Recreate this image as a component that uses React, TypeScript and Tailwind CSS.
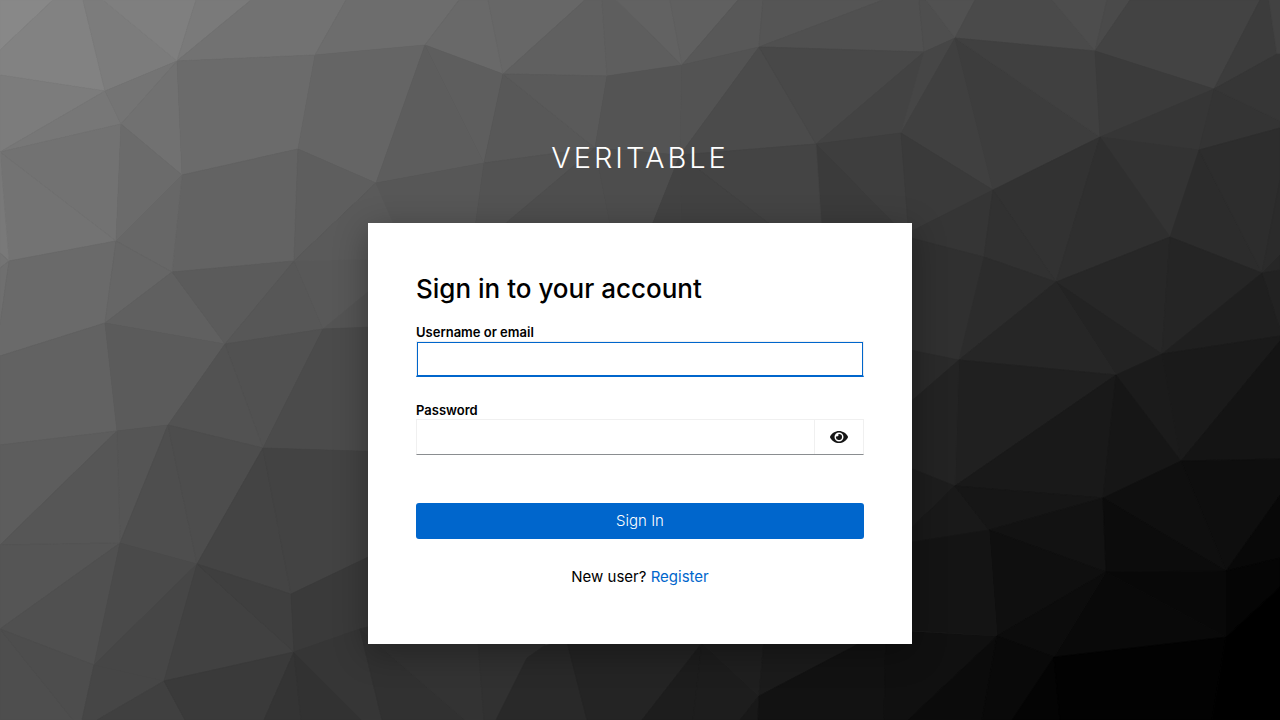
import { useState } from "react";
import { FaEye, FaEyeSlash } from "react-icons/fa";

/* Facets of the low-poly backdrop: [grey level, polygon points]. */
const facets: [number, string][] = [
  [0x88, "0,0 53,0 0,50"],
  [0x82, "53,0 83,0 105,91 0,75 0,50"],
  [0x7c, "83,0 103,0 177,61 105,91"],
  [0x7f, "103,0 196,0 177,61"],
  [0x7a, "196,0 251,0 177,61"],
  [0x72, "251,0 346,0 315,55 177,61"],
  [0x7c, "0,75 105,91 0,152"],
  [0x77, "0,152 105,91 121,124"],
  [0x74, "105,91 177,61 121,124"],
  [0x71, "121,124 177,61 182,175"],
  [0x72, "0,152 121,124 116,241"],
  [0x73, "0,152 116,241 9,261"],
  [0x79, "0,152 9,261 0,253"],
  [0x74, "0,253 9,261 0,268"],
  [0x6b, "177,61 315,55 298,149 182,175"],
  [0x6d, "346,0 459,0 425,45 315,55"],
  [0x6b, "121,124 182,175 116,241"],
  [0x63, "182,175 298,149 294,261 172,272"],
  [0x67, "182,175 116,241 172,272"],
  [0x65, "315,55 425,45 376,183 298,149"],
  [0x5e, "298,149 376,183 294,261"],
  [0x6f, "0,268 9,261 0,325"],
  [0x6a, "9,261 116,241 105,323 0,356 0,325"],
  [0x66, "116,241 172,272 105,323"],
  [0x62, "0,356 105,323 117,431 0,445"],
  [0x60, "172,272 105,323 225,344"],
  [0x5b, "172,272 294,261 225,344"],
  [0x5b, "105,323 225,344 168,425 117,431"],
  [0x5d, "0,445 117,431 0,545"],
  [0x57, "294,261 225,344 323,329"],
  [0x58, "294,261 376,183 520,258 323,329"],
  [0x5a, "294,261 376,183 430,258"],
  [0x54, "323,329 368,292 440,240 440,326"],
  [0x51, "225,344 323,329 263,448"],
  [0x52, "225,344 168,425 263,448"],
  [0x4b, "323,329 450,324 450,454 263,448"],
  [0x55, "117,431 168,425 120,543"],
  [0x56, "0,545 117,431 120,543"],
  [0x4e, "168,425 120,543 197,564"],
  [0x4d, "168,425 263,448 197,564"],
  [0x55, "0,545 120,543 0,629"],
  [0x50, "0,629 120,543 94,665"],
  [0x4a, "120,543 197,564 94,665"],
  [0x46, "94,665 197,564 164,681"],
  [0x44, "263,448 197,564 291,594"],
  [0x43, "263,448 450,454 450,518 291,594"],
  [0x41, "197,564 164,681 294,652"],
  [0x3f, "197,564 291,594 294,652"],
  [0x3a, "291,594 450,518 450,600 360,629 294,652"],
  [0x4e, "0,629 73,720 0,720"],
  [0x4d, "0,629 94,665 82,720 73,720"],
  [0x46, "94,665 164,681 97,720 82,720"],
  [0x40, "164,681 185,720 97,720"],
  [0x3a, "164,681 294,652 264,720 185,720"],
  [0x34, "294,652 301,720 264,720"],
  [0x32, "294,652 362,720 301,720"],
  [0x36, "294,652 360,629 382,720 362,720"],
  [0x31, "360,629 465,720 382,720"],
  [0x33, "360,629 475,600 484,720 465,720"],
  [0x31, "475,600 560,620 544,646 527,658 496,720 484,720"],
  [0x29, "544,646 567,640 587,720 496,720 527,658"],
  [0x24, "564,630 712,630 642,720 587,720"],
  [0x1d, "702,643 693,720 642,720"],
  [0x1d, "702,643 759,696 740,720 693,720"],
  [0x1f, "700,640 764,640 759,696 702,643"],
  [0x1b, "764,640 868,640 759,696"],
  [0x18, "759,696 758,720 740,720"],
  [0x12, "759,696 866,640 886,640 884,720 758,720"],
  [0x10, "886,630 997,636 908,720 884,720"],
  [0x69, "459,0 488,0 503,74 425,45"],
  [0x67, "488,0 585,0 503,74"],
  [0x60, "585,0 602,0 607,76 503,74"],
  [0x5e, "602,0 616,0 682,65 607,76"],
  [0x62, "616,0 670,0 682,65"],
  [0x60, "670,0 738,0 682,65"],
  [0x58, "738,0 763,0 759,47 682,65"],
  [0x55, "763,0 883,0 759,47"],
  [0x50, "883,0 919,0 924,52 759,47"],
  [0x4e, "919,0 926,0 955,38 924,52"],
  [0x51, "926,0 975,0 955,38"],
  [0x4a, "975,0 1052,0 1095,51 955,38"],
  [0x4d, "1052,0 1107,0 1095,51"],
  [0x4a, "1107,0 1130,0 1095,51"],
  [0x43, "1130,0 1260,0 1214,89 1095,51"],
  [0x3c, "1260,0 1269,0 1277,54 1214,89"],
  [0x42, "1269,0 1280,0 1280,54 1277,54"],
  [0x5d, "425,45 484,163 376,183"],
  [0x5e, "425,45 503,74 484,163"],
  [0x58, "503,74 595,148 484,163"],
  [0x5a, "503,74 607,76 595,148"],
  [0x54, "607,76 682,65 680,155 595,148"],
  [0x57, "376,183 484,163 472,250 405,250"],
  [0x53, "484,163 595,148 476,250 472,250"],
  [0x4e, "595,148 615,250 474,250"],
  [0x4d, "595,148 680,155 642,250 615,250"],
  [0x53, "682,65 759,47 680,155"],
  [0x4b, "759,47 816,144 680,155"],
  [0x48, "759,47 924,52 816,144"],
  [0x43, "924,52 901,133 816,144"],
  [0x46, "924,52 955,38 901,133"],
  [0x40, "955,38 993,190 901,133"],
  [0x3d, "955,38 1100,137 993,190"],
  [0x40, "955,38 1095,51 1100,137"],
  [0x3b, "1095,51 1214,89 1100,137"],
  [0x36, "1214,89 1199,150 1100,137"],
  [0x34, "1214,89 1280,121 1280,128 1199,150"],
  [0x36, "1214,89 1277,54 1280,54 1280,121"],
  [0x33, "1100,137 1199,150 1170,237"],
  [0x2c, "1199,150 1262,273 1170,237"],
  [0x2d, "1199,150 1280,128 1280,180 1262,273"],
  [0x3e, "816,144 901,133 909,240 893,223"],
  [0x3b, "816,144 910,240 823,240"],
  [0x44, "680,155 816,144 823,250 803,250"],
  [0x42, "680,155 803,250 682,250"],
  [0x43, "680,155 682,250 642,250"],
  [0x3a, "901,133 993,190 909,238"],
  [0x32, "1100,137 1056,282 993,190"],
  [0x2f, "1100,137 1170,237 1056,282"],
  [0x35, "993,190 984,257 900,237"],
  [0x31, "993,190 1056,282 984,257"],
  [0x30, "900,235 984,257 959,360 900,348"],
  [0x2c, "984,257 1056,282 959,360"],
  [0x27, "1056,282 1170,237 1162,354"],
  [0x25, "1170,237 1262,273 1162,354"],
  [0x23, "1056,282 1162,354 1116,375"],
  [0x26, "1056,282 1116,375 959,360"],
  [0x2a, "900,348 959,360 900,411"],
  [0x20, "959,360 1116,375 955,486"],
  [0x23, "959,360 955,486 900,464 900,411"],
  [0x2b, "1280,180 1280,255 1262,273"],
  [0x27, "1280,255 1280,270 1262,273"],
  [0x22, "1262,273 1280,270 1280,330"],
  [0x1f, "1262,273 1280,330 1280,336 1162,354"],
  [0x1b, "1162,354 1181,461 1116,375"],
  [0x1a, "1162,354 1280,336 1280,341 1181,461"],
  [0x14, "1280,341 1280,459 1181,461"],
  [0x19, "1116,375 1103,498 955,486"],
  [0x16, "1116,375 1181,461 1103,498"],
  [0x0e, "1181,461 1280,459 1280,495 1226,571"],
  [0x0f, "1181,461 1226,571 1103,498"],
  [0x1d, "900,464 955,486 900,539"],
  [0x19, "900,539 955,486 989,530 900,544"],
  [0x16, "955,486 1103,498 989,530"],
  [0x12, "1103,498 1106,572 989,530"],
  [0x0f, "989,530 1106,572 997,636"],
  [0x14, "900,544 989,530 997,636 900,630"],
  [0x0c, "1103,498 1226,571 1106,572"],
  [0x08, "1226,571 1280,495 1280,558"],
  [0x05, "1226,571 1280,558 1280,587 1226,637"],
  [0x08, "1106,572 1226,571 1226,637"],
  [0x09, "1106,572 1226,637 1054,657"],
  [0x0c, "1106,572 1054,657 997,636"],
  [0x0b, "997,636 982,720 908,720"],
  [0x09, "997,636 1054,657 1012,720 982,720"],
  [0x04, "1054,657 1060,720 1012,720"],
  [0x02, "1054,657 1226,637 1212,720 1060,720"],
  [0x00, "1226,637 1280,587 1280,720 1212,720"],
];

function Backdrop() {
  return (
    <svg
      aria-hidden="true"
      viewBox="0 0 1280 720"
      preserveAspectRatio="xMidYMid slice"
      className="absolute inset-0 -z-10 h-full w-full bg-[#3c3c3c]"
    >
      {facets.map(([level, points]) => {
        const color = `rgb(${level},${level},${level})`;
        return <polygon key={points} points={points} fill={color} stroke={color} strokeWidth="0.7" />;
      })}
    </svg>
  );
}

export default function App() {
  const [visible, setVisible] = useState(false);

  return (
    <div className="relative isolate flex min-h-screen flex-col items-center overflow-hidden font-['Inter','Liberation_Sans',sans-serif] text-black">
      <Backdrop />
      <header className="px-4 pt-[138px] pb-[45px] text-center text-[29px] leading-10 font-light tracking-[3px] text-white uppercase">
        Veritable
      </header>
      <main className="w-full max-w-[544px] bg-white px-12 pt-12 pb-[55px] shadow-[0_8px_32px_0_rgba(3,3,3,0.32)]">
        <h1 className="text-[26px] leading-9 font-medium">Sign in to your account</h1>
        <form className="mt-4 flex flex-col" onSubmit={(e) => e.preventDefault()}>
          <label htmlFor="username" className="text-[13px] leading-[18px] font-semibold">
            Username or email
          </label>
          <input
            id="username"
            name="username"
            type="text"
            autoComplete="username"
            className="h-9 w-full border border-b-2 border-[#f0f0f0] border-b-[#0066cc] bg-white px-2 text-base shadow-[inset_1px_1px_0_#0066cc,inset_-1px_0_0_#0066cc] outline-none"
          />
          <label htmlFor="password" className="mt-6 text-[13px] leading-[18px] font-semibold">
            Password
          </label>
          <div className="flex h-9 border border-[#f0f0f0] border-b-[#8a8d90]">
            <input
              id="password"
              name="password"
              type={visible ? "text" : "password"}
              autoComplete="current-password"
              className="min-w-0 flex-1 bg-white px-2 text-base outline-none"
            />
            <button
              type="button"
              aria-label={visible ? "Hide password" : "Show password"}
              onClick={() => setVisible(!visible)}
              className="flex w-[49px] items-center justify-center border-l border-[#f0f0f0] text-[#151515]"
            >
              {visible ? <FaEyeSlash className="h-4 w-[18px]" /> : <FaEye className="h-4 w-[18px]" />}
            </button>
          </div>
          <button
            type="submit"
            className="mt-12 h-9 rounded-[3px] bg-[#0066cc] text-[15px] leading-6 font-light text-white"
          >
            Sign In
          </button>
        </form>
        <p className="mt-[26px] text-center text-[15px] leading-6">
          New user?{" "}
          <a href="#register" className="text-[#0066cc]">
            Register
          </a>
        </p>
      </main>
    </div>
  );
}
